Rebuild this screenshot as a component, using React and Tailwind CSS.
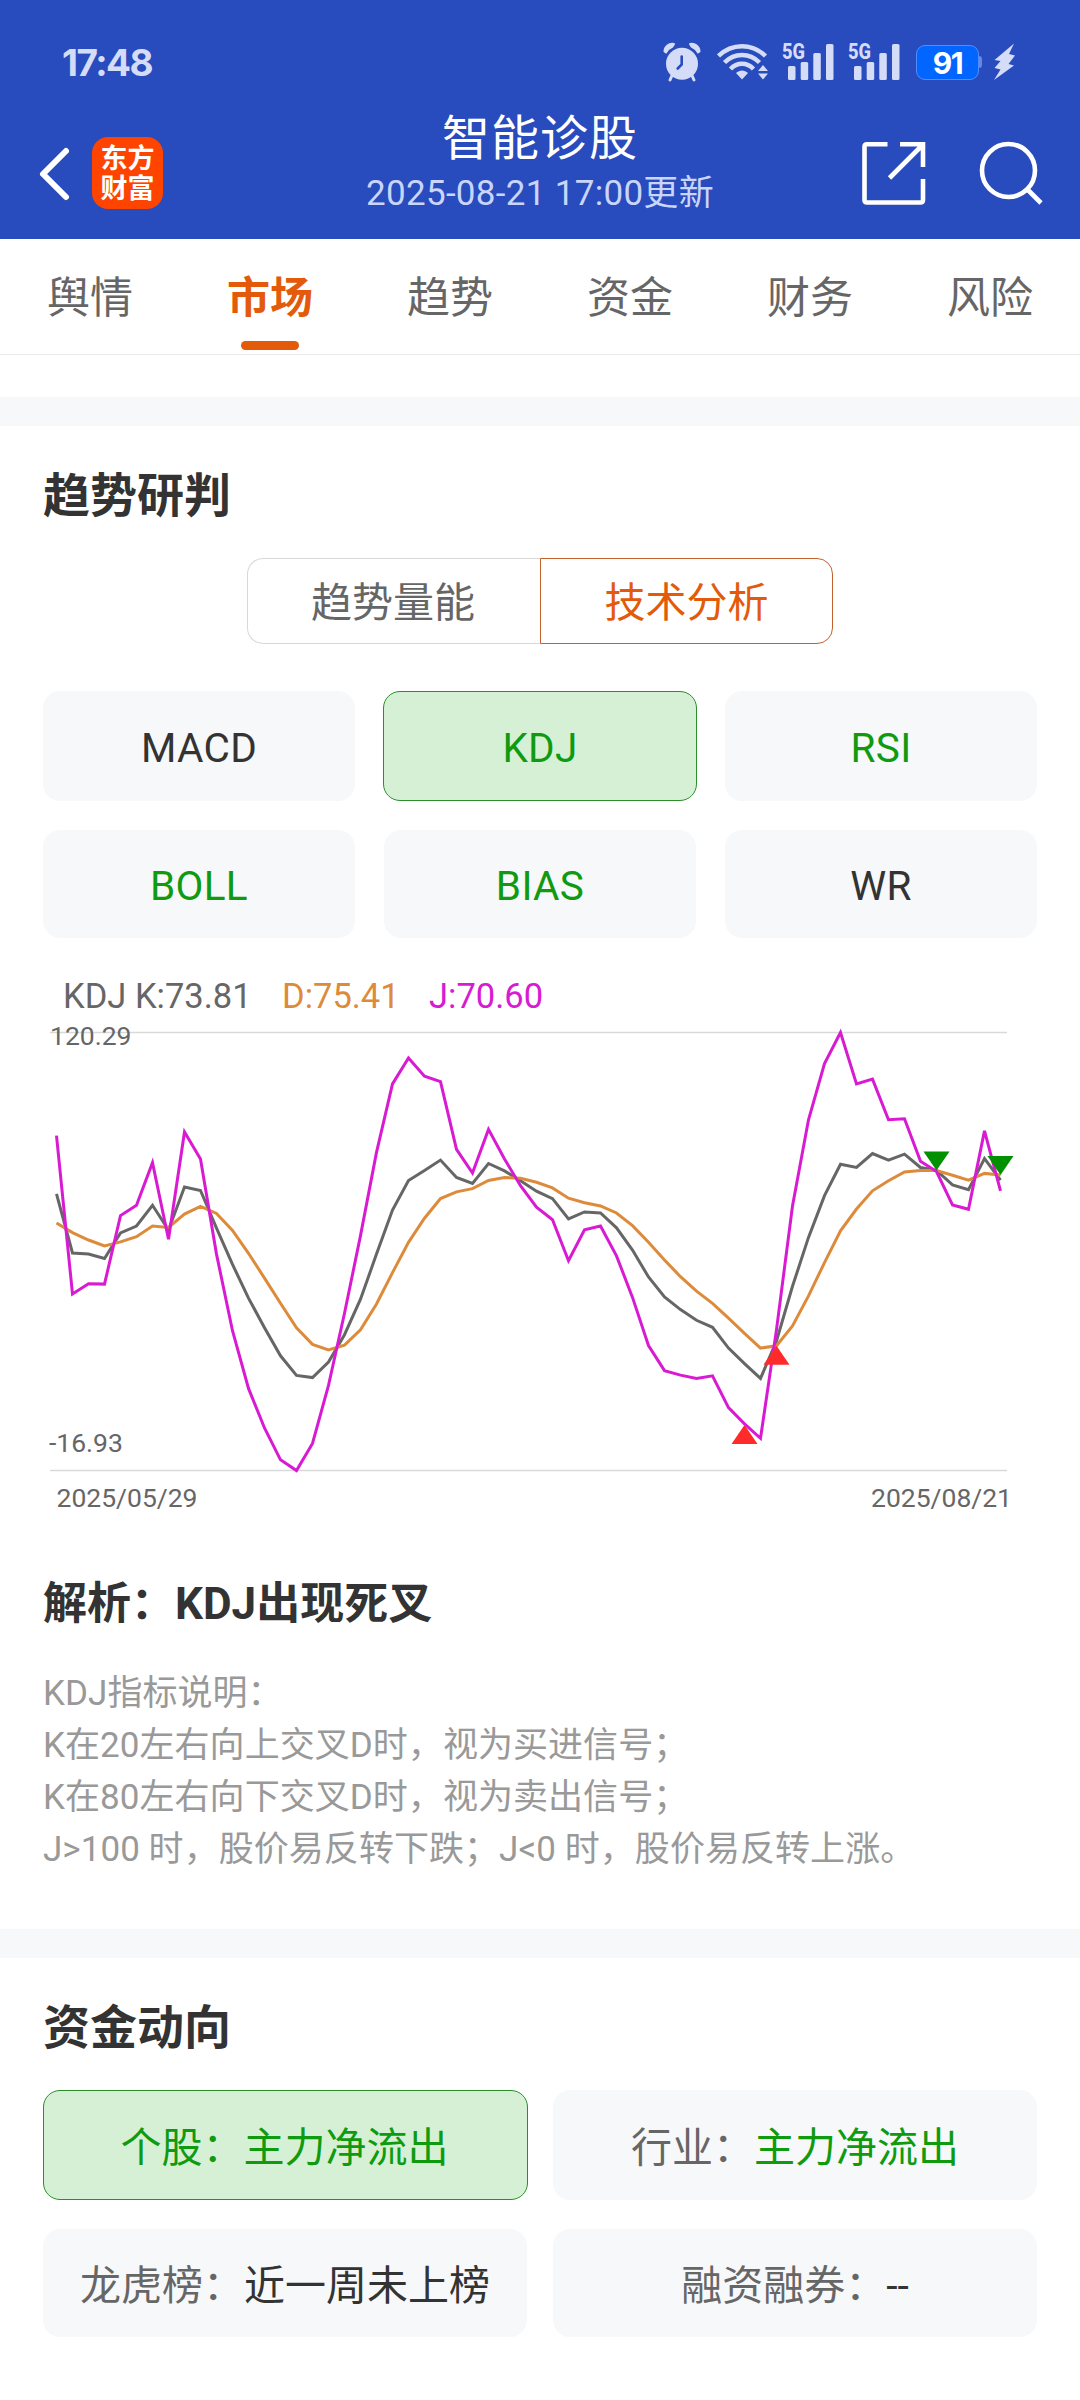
const LATIN = "font-['Roboto','Noto_Sans_CJK_SC',sans-serif]"

const tabs = ['舆情', '市场', '趋势', '资金', '财务', '风险']

const indicators = [
  { name: 'MACD', down: false },
  { name: 'KDJ', down: true, active: true },
  { name: 'RSI', down: true },
  { name: 'BOLL', down: true },
  { name: 'BIAS', down: true },
  { name: 'WR', down: false },
]

const funds = [
  { label: '个股：', value: '主力净流出', down: true, active: true },
  { label: '行业：', value: '主力净流出', down: true },
  { label: '龙虎榜：', value: '近一周未上榜' },
  { label: '融资融券：', value: '--' },
]

const notes = [
  'KDJ指标说明：',
  'K在20左右向上交叉D时，视为买进信号；',
  'K在80左右向下交叉D时，视为卖出信号；',
  'J>100 时，股价易反转下跌；J<0 时，股价易反转上涨。',
]

// one sample per trading day, measured downwards: 196 = 120.29, 1380 = -16.93
const SCALE_TOP = 196
const SCALE_BOTTOM = 1380

const kLine = [
  632, 792, 795, 807, 738, 719, 663, 730, 614, 623, 725, 823, 914, 994, 1070,
  1123, 1129, 1087, 1013, 917, 795, 676, 596, 569, 541, 588, 604, 550, 570, 597,
  625, 645, 700, 681, 684, 724, 784, 857, 911, 945, 974, 993, 1049, 1091, 1131,
  1030, 882, 750, 637, 552, 561, 523, 541, 525, 561, 569, 608, 621, 537, 595,
]
const dLine = [
  711, 737, 757, 773, 762, 748, 719, 723, 687, 666, 685, 731, 793, 860, 928,
  994, 1039, 1054, 1041, 1000, 930, 845, 763, 698, 645, 627, 618, 596, 588, 590,
  601, 616, 644, 656, 665, 684, 718, 763, 811, 856, 895, 928, 968, 1009, 1049,
  1043, 989, 908, 818, 732, 673, 624, 597, 573, 569, 569, 582, 595, 577, 581,
]
const jLine = [
  475, 903, 875, 876, 691, 663, 548, 755, 465, 538, 795, 1002, 1158, 1265, 1351,
  1380, 1307, 1150, 955, 745, 520, 335, 265, 314, 329, 512, 576, 458, 538, 610,
  668, 702, 813, 729, 719, 800, 912, 1042, 1110, 1122, 1131, 1124, 1210, 1254, 1293,
  999, 665, 432, 280, 196, 335, 322, 432, 429, 544, 572, 662, 674, 462, 624,
]

const signals = [
  { day: 43, level: 1257, buy: true },
  { day: 45, level: 1043, buy: true },
  { day: 55, level: 569, buy: false },
  { day: 59, level: 581, buy: false },
]

const px = (day) => 6.5 + day * 16
const py = (level) => 8.5 + ((level - SCALE_TOP) / (SCALE_BOTTOM - SCALE_TOP)) * 438

function toPoints(line) {
  return line.map((level, day) => `${px(day)},${py(level).toFixed(1)}`).join(' ')
}

function SignalBars() {
  return (
    <svg width="52" height="56" viewBox="0 -8 52 56" fill="#d5dcf8">
      <text x="0" y="17" fontSize="22" fontWeight="800" fontFamily="Roboto, sans-serif" textLength="23" lengthAdjust="spacingAndGlyphs">5G</text>
      <rect x="6" y="24" width="7.5" height="14" rx="1.5" />
      <rect x="18.7" y="20" width="7.5" height="18" rx="1.5" />
      <rect x="31.3" y="11" width="7.5" height="27" rx="1.5" />
      <rect x="44" y="2" width="7.5" height="36" rx="1.5" />
    </svg>
  )
}

function StatusBar() {
  return (
    <div className="flex h-[96px] items-center justify-between pt-[28px] pr-[64px] pl-[62px] text-[#d5dcf8]">
      <span className="font-['Inter',sans-serif] text-[37px] leading-none font-bold tracking-[-1.5px]">17:48</span>
      <div className="flex items-center">
        <svg className="mr-[16px]" width="38" height="40" viewBox="0 0 38 40" fill="#d5dcf8">
          <circle cx="19" cy="21.800" r="16" />
          <path d="M1.500 9.500C1.500 4.500 6 1 11 2L9.500 4.500Q5 6.500 3 10.500Z" stroke="#d5dcf8" strokeWidth="2" strokeLinejoin="round" />
          <path d="M36.500 9.500C36.500 4.500 32 1 27 2L28.500 4.500Q33 6.500 35 10.500Z" stroke="#d5dcf8" strokeWidth="2" strokeLinejoin="round" />
          <path d="M9 33.500 7 38M29 33.500 31 38" stroke="#d5dcf8" strokeWidth="3" strokeLinecap="round" />
          <path d="M18.700 14.500v8l-4 4" fill="none" stroke="#284bbd" strokeWidth="2.600" strokeLinecap="round" />
        </svg>
        <svg className="mr-[14px]" width="51" height="40" viewBox="0 0 51 40" fill="none" stroke="#d5dcf8" strokeWidth="4.500">
          <path d="M1.500 14C15 1 35 1 48.500 14" />
          <path d="M7.500 20.500C17.500 10.500 32.500 10.500 42.500 20.500" />
          <path d="M13.500 27C20 20 30 20 36.500 27" />
          <path d="M19 31C22.500 27.500 27.500 27.500 31 31L25 37.500Z" fill="#d5dcf8" stroke="none" />
          <path d="M46 23l5 6h-10zM46 37.500l5-6h-10z" fill="#d5dcf8" stroke="none" />
        </svg>
        <div className="mr-[14px]"><SignalBars /></div>
        <div className="mr-[16px]"><SignalBars /></div>
        <div className="flex h-[35px] w-[63px] items-center justify-center rounded-[9px] border border-[#4f8dff] bg-[#0066ff] pt-px font-['Inter',sans-serif] text-[30px] leading-none font-bold tracking-[-1.5px] text-white">
          91
        </div>
        <div className="mr-[11px] h-3 w-[3px] rounded-r-sm bg-[#6d86dc]" />
        <svg width="23" height="38" viewBox="0 0 23 38" fill="#d5dcf8">
          <path d="M21 .5 1.500 17l6 1L1.500 25l6 1.500L1 37 21 22.500l-5.500-1.500L22 12.500l-6-1.500Z" />
        </svg>
      </div>
    </div>
  )
}

function Header() {
  return (
    <header className="h-[239px] bg-[#284bbd] text-white">
      <StatusBar />
      <div className="grid h-[143px] grid-cols-[1fr_auto_1fr]">
        <div className="flex items-start pl-[38px]">
          <svg className="mt-[50px]" width="34" height="56" viewBox="0 0 34 56" fill="none" stroke="white" strokeWidth="6" strokeLinecap="round" strokeLinejoin="round">
            <path d="M28 5 5 28l23 23" />
          </svg>
          <div className="mt-[41px] ml-[20px] flex h-[72px] w-[71px] flex-col items-center justify-center rounded-[16px] bg-[#ff4400] pt-px text-[27px] leading-[30px] font-bold">
            <span>东方</span>
            <span>财富</span>
          </div>
        </div>
        <div className="flex flex-col items-center pt-[11px]">
          <h1 className="text-[48px] leading-[63px] tracking-[1px]">智能诊股</h1>
          <p className="text-[35px] leading-[48px] tracking-[0.3px] text-[#c9d5fb]">2025-08-21 17:00更新</p>
        </div>
        <div className="flex items-start justify-end gap-[52px] pt-[43px] pr-[36px]">
          <svg width="66" height="68" viewBox="0 0 66 68" fill="none" stroke="white" strokeWidth="4.600">
            <path d="M27.500 5.300H7Q4.500 5.300 4.500 8V61Q4.500 63.500 7 63.500H60.500Q63 63.500 63 61V40" />
            <path d="M40 5.300H63V28M62 6.500 29.500 39" />
          </svg>
          <svg width="66" height="68" viewBox="0 0 66 68" fill="none" stroke="white" strokeWidth="4.600">
            <circle cx="30.500" cy="31.500" r="26.500" />
            <path d="m49 50 14 14" />
          </svg>
        </div>
      </div>
    </header>
  )
}

function TabBar() {
  return (
    <nav className="grid h-[116px] grid-cols-6 border-b border-[#ebebeb] bg-white">
      {tabs.map((tab) => {
        const active = tab === '市场'
        return (
          <div key={tab} className="flex flex-col items-center pt-[27px]">
            <span className={`text-[43px] leading-[64px] ${active ? 'font-bold text-[#e35a0a]' : 'text-[#666]'}`}>{tab}</span>
            {active && <span className="mt-[11px] h-[9px] w-[58px] rounded-full bg-[#e35a0a]" />}
          </div>
        )
      })}
    </nav>
  )
}

function KdjChart() {
  return (
    <div className="pt-[31px]">
      <div className="flex h-[55px] items-center pl-[20px] text-[34.5px]">
        <span className="w-[219px] text-[#666]">KDJ K:73.81</span>
        <span className="w-[147px] text-[#dd8b3b]">D:75.41</span>
        <span className="text-[#d81bd2]">J:70.60</span>
      </div>
      <svg width="980" height="492" viewBox="0 0 980 492" className="ml-[7px] overflow-visible" fontFamily="Roboto, sans-serif">
        <path d="M0 8.500H957M0 446.500H957" stroke="#d9d9d9" strokeWidth="1.500" />
        <g fill="#666" fontSize="26.500">
          <text x="0" y="20.500">120.29</text>
          <text x="-1" y="427.500">-16.93</text>
          <text x="6.500" y="483">2025/05/29</text>
          <text x="962" y="483" textAnchor="end">2025/08/21</text>
        </g>
        <g fill="none" strokeWidth="3">
          <polyline points={toPoints(kLine)} stroke="#666" />
          <polyline points={toPoints(dLine)} stroke="#dd8b3b" />
          <polyline points={toPoints(jLine)} stroke="#d81bd2" />
        </g>
        {signals.map(({ day, level, buy }) => {
          const x = px(day)
          const y = py(level)
          const base = buy ? y + 19 : y - 19
          return (
            <polygon
              key={day}
              points={`${x},${y} ${x - 13},${base} ${x + 13},${base}`}
              fill={buy ? '#ff2b2b' : '#009000'}
            />
          )
        })}
      </svg>
    </div>
  )
}

function TrendSection() {
  return (
    <section className="h-[1503px] px-[43px] pt-[36px]">
      <h2 className="text-[47px] leading-[68px] font-bold text-[#333]">趋势研判</h2>
      <div className="mx-auto mt-[28px] grid h-[86px] w-[586px] grid-cols-2 text-[41px]">
        <div className="flex items-center justify-center rounded-l-[16px] border border-r-0 border-[#d8d8d8] pt-[5px] pr-[2px] text-[#666]">趋势量能</div>
        <div className="flex items-center justify-center rounded-r-[16px] border border-[#c4622c] pt-[5px] text-[#e35a0a]">技术分析</div>
      </div>
      <div className="mt-[47px] grid grid-cols-3 grid-rows-[110px_108px] gap-x-[29px] gap-y-[29px] text-[40.5px]">
        {indicators.map(({ name, down, active }) => (
          <div
            key={name}
            className={`flex items-center justify-center rounded-[17px] pt-[5px] tracking-[0.3px] ${active ? '-mx-px border border-[#2a8f2a] bg-[#d6f0d6]' : 'bg-[#f7f8fa]'} ${down ? 'text-[#0f9a0f]' : 'text-[#333]'}`}
          >
            {name}
          </div>
        ))}
      </div>
      <KdjChart />
      <h3 className="mt-[56px] text-[44px] leading-[64px] font-bold text-[#333]">解析：KDJ出现死叉</h3>
      <div className="mt-[32px] text-[35px] leading-[52px] tracking-[0.05px] text-[#999]">
        {notes.map((line) => (
          <p key={line}>{line}</p>
        ))}
      </div>
    </section>
  )
}

function FundSection() {
  return (
    <section className="px-[43px] pt-[36px]">
      <h2 className="text-[47px] leading-[68px] font-bold text-[#333]">资金动向</h2>
      <div className="mt-[28px] grid grid-cols-2 grid-rows-[110px_108px] gap-x-[26px] gap-y-[29px] text-[41px]">
        {funds.map(({ label, value, down, active }) => (
          <div
            key={label}
            className={`flex items-center justify-center rounded-[17px] pt-[7px] ${active ? '-mr-px border border-[#2a8f2a] bg-[#d6f0d6] pr-[2px]' : 'bg-[#f7f8fa]'}`}
          >
            <span className={active ? 'text-[#0f9a0f]' : 'text-[#666]'}>{label}</span>
            <span className={down ? 'text-[#0f9a0f]' : 'text-[#333]'}>{value}</span>
          </div>
        ))}
      </div>
    </section>
  )
}

export default function App() {
  return (
    <div lang="zh-CN" className={`${LATIN} h-[2400px] w-[1080px] overflow-hidden bg-white`}>
      <Header />
      <TabBar />
      <div className="mt-[42px] h-[29px] bg-[#f7f8fa]" />
      <TrendSection />
      <div className="h-[29px] bg-[#f7f8fa]" />
      <FundSection />
    </div>
  )
}
